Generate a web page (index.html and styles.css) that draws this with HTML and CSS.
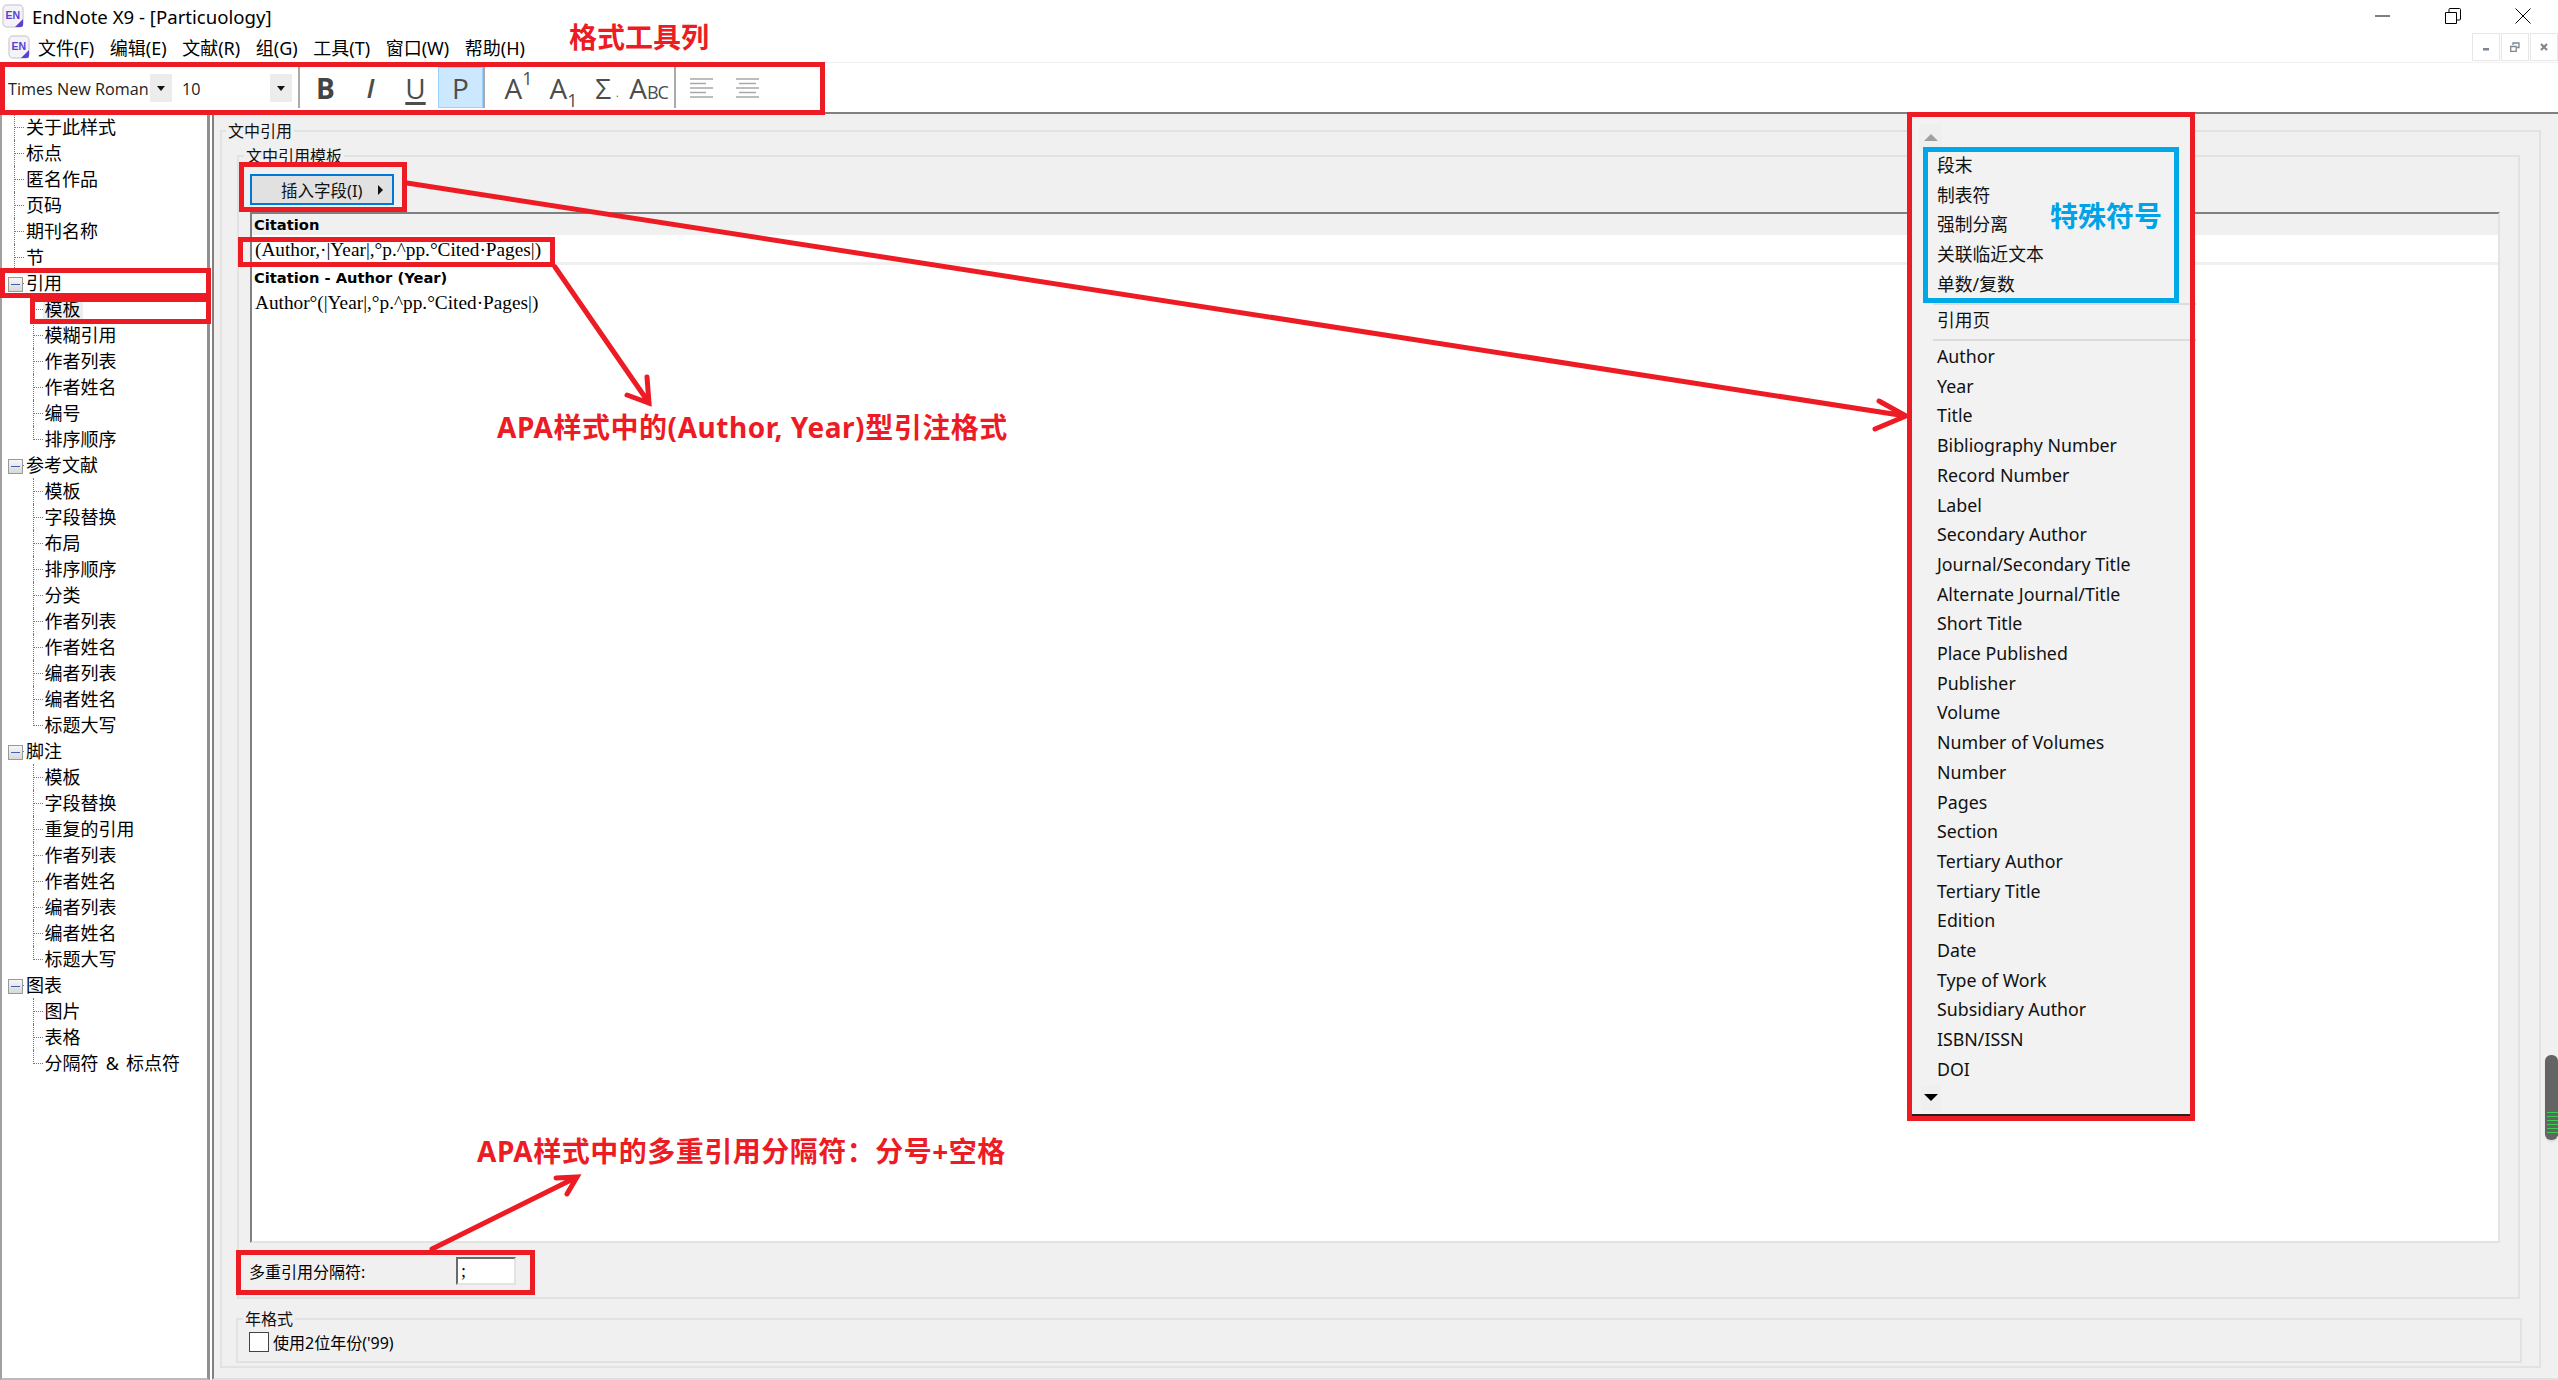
FILE: index.html
```html
<!DOCTYPE html>
<html lang="zh-CN">
<head>
  <meta charset="UTF-8" />
  <title>EndNote X9 - [Particuology]</title>
  <link rel="stylesheet" href="styles.css">
</head>
<body>
  <div class="app">
    <div class="titlebar">
      <svg class="en-icon title-icon" viewBox="0 0 22 24"><rect x="1" y="1" width="20" height="22" rx="4" fill="#f4f4f8" stroke="#d4d4dc" stroke-width="1.5"/><text x="3.5" y="15" class="en-text">EN</text><path d="M21 15v6q0 2-2 2h-6z" fill="#5b3fd0"/></svg>
      <span class="title-text">EndNote X9 - [Particuology]</span>
      <div class="win-controls">
        <div class="win-btn"><svg width="16" height="16" viewBox="0 0 16 16"><path d="M0 8h15" stroke="#000" fill="none"/></svg></div>
        <div class="win-btn"><svg width="16" height="16" viewBox="0 0 16 16"><path d="M.5 4.500h11v11H.5zM4 4V1.500q0-1 1-1h9.500q1 0 1 1V11q0 1-1 1H12" stroke="#000" fill="none"/></svg></div>
        <div class="win-btn"><svg width="16" height="16" viewBox="0 0 16 16"><path d="M.5.500l15 15M15.500.500l-15 15" stroke="#000" fill="none"/></svg></div>
      </div>
    </div>

    <div class="menubar">
      <svg class="en-icon" viewBox="0 0 22 24"><rect x="1" y="1" width="20" height="22" rx="4" fill="#f4f4f8" stroke="#d4d4dc" stroke-width="1.5"/><text x="3.5" y="15" class="en-text">EN</text><path d="M21 15v6q0 2-2 2h-6z" fill="#5b3fd0"/></svg>
      <span>文件(F)</span>
      <span>编辑(E)</span>
      <span>文献(R)</span>
      <span>组(G)</span>
      <span>工具(T)</span>
      <span>窗口(W)</span>
      <span>帮助(H)</span>
      <div class="mdi-controls">
        <div class="mdi-btn"><svg width="10" height="10" viewBox="0 0 10 10"><rect x="2" y="6" width="6" height="2.500" fill="#7d8794"/></svg></div>
        <div class="mdi-btn"><svg width="10" height="10" viewBox="0 0 10 10"><path d="M.7 4.500h5.500v4.800H.7zM3 3V1h6v4.500H7" stroke="#7d8794" stroke-width="1.300" fill="none"/></svg></div>
        <div class="mdi-btn"><svg width="10" height="10" viewBox="0 0 10 10"><path d="M2 2l6 6M8 2l-6 6" stroke="#7d8794" stroke-width="2.200" fill="none"/></svg></div>
      </div>
    </div>

    <div class="toolbar">
      <div class="tb-font">Times New Roman</div>
      <div class="tb-drop"></div>
      <div class="tb-size">10</div>
      <div class="tb-drop"></div>
      <div class="tb-sep first"></div>
      <div class="tb-btn bold">B</div>
      <div class="tb-btn italic">I</div>
      <div class="tb-btn under">U</div>
      <div class="tb-btn active">P</div>
      <div class="tb-sep"></div>
      <div class="tb-gap"></div>
      <div class="tb-btn">A<span class="sup">1</span></div>
      <div class="tb-btn">A<span class="sub">1</span></div>
      <div class="tb-btn sigma">Σ<span class="dot">.</span></div>
      <div class="tb-btn abc">A<span class="small-caps">BC</span></div>
      <div class="tb-sep last"></div>
      <svg class="align-icon" width="24" height="20" viewBox="0 0 24 20"><path d="M0 1h23M0 5.500h16M0 10h23M0 14.500h16M0 19h23" stroke="#a8a8a8" stroke-width="1.500"/></svg>
      <svg class="align-icon" width="24" height="20" viewBox="0 0 24 20"><path d="M0 1h23M3 5.500h17M0 10h23M3 14.500h17M0 19h23" stroke="#a8a8a8" stroke-width="1.500"/></svg>
    </div>

    <div class="main">
      <div class="tree">
        <div class="t-root line">关于此样式</div>
        <div class="t-root line">标点</div>
        <div class="t-root line">匿名作品</div>
        <div class="t-root line">页码</div>
        <div class="t-root line">期刊名称</div>
        <div class="t-root line">节</div>
        <div class="t-root open">引用</div>
        <div class="t-leaf"><span class="selected">模板</span></div>
        <div class="t-leaf">模糊引用</div>
        <div class="t-leaf">作者列表</div>
        <div class="t-leaf">作者姓名</div>
        <div class="t-leaf">编号</div>
        <div class="t-leaf last">排序顺序</div>
        <div class="t-root open">参考文献</div>
        <div class="t-leaf">模板</div>
        <div class="t-leaf">字段替换</div>
        <div class="t-leaf">布局</div>
        <div class="t-leaf">排序顺序</div>
        <div class="t-leaf">分类</div>
        <div class="t-leaf">作者列表</div>
        <div class="t-leaf">作者姓名</div>
        <div class="t-leaf">编者列表</div>
        <div class="t-leaf">编者姓名</div>
        <div class="t-leaf last">标题大写</div>
        <div class="t-root open">脚注</div>
        <div class="t-leaf">模板</div>
        <div class="t-leaf">字段替换</div>
        <div class="t-leaf">重复的引用</div>
        <div class="t-leaf">作者列表</div>
        <div class="t-leaf">作者姓名</div>
        <div class="t-leaf">编者列表</div>
        <div class="t-leaf">编者姓名</div>
        <div class="t-leaf last">标题大写</div>
        <div class="t-root open">图表</div>
        <div class="t-leaf">图片</div>
        <div class="t-leaf">表格</div>
        <div class="t-leaf last">分隔符 &amp; 标点符</div>
      </div>

      <div class="pane">
        <fieldset class="group outer">
          <legend>文中引用</legend>
          <fieldset class="group template">
            <legend>文中引用模板</legend>
            <button class="insert-btn">插入字段(I)<span class="arrow-right"></span></button>
            <div class="editor">
              <div class="ed-head">Citation</div>
              <div class="ed-line sep">(Author,·|Year|,°p.^pp.°Cited·Pages|)</div>
              <div class="ed-title">Citation - Author (Year)</div>
              <div class="ed-line">Author°(|Year|,°p.^pp.°Cited·Pages|)</div>
            </div>
            <div class="sep-row">
              <label class="sep-label">多重引用分隔符:</label>
              <div class="sep-input">;</div>
            </div>
          </fieldset>
          <fieldset class="group year">
            <legend>年格式</legend>
            <div class="check-row">
              <span class="checkbox"></span>
              <span>使用2位年份('99)</span>
            </div>
          </fieldset>
        </fieldset>
      </div>
    </div>

    <!-- popup menu -->
    <div class="popup">
      <div class="scroll-up"><span class="tri-up"></span></div>
      <div class="pop-item">段末</div>
      <div class="pop-item">制表符</div>
      <div class="pop-item">强制分离</div>
      <div class="pop-item">关联临近文本</div>
      <div class="pop-item">单数/复数</div>
      <div class="pop-sep"></div>
      <div class="pop-item">引用页</div>
      <div class="pop-sep second"></div>
      <div class="pop-item">Author</div>
      <div class="pop-item">Year</div>
      <div class="pop-item">Title</div>
      <div class="pop-item">Bibliography Number</div>
      <div class="pop-item">Record Number</div>
      <div class="pop-item">Label</div>
      <div class="pop-item">Secondary Author</div>
      <div class="pop-item">Journal/Secondary Title</div>
      <div class="pop-item">Alternate Journal/Title</div>
      <div class="pop-item">Short Title</div>
      <div class="pop-item">Place Published</div>
      <div class="pop-item">Publisher</div>
      <div class="pop-item">Volume</div>
      <div class="pop-item">Number of Volumes</div>
      <div class="pop-item">Number</div>
      <div class="pop-item">Pages</div>
      <div class="pop-item">Section</div>
      <div class="pop-item">Tertiary Author</div>
      <div class="pop-item">Tertiary Title</div>
      <div class="pop-item">Edition</div>
      <div class="pop-item">Date</div>
      <div class="pop-item">Type of Work</div>
      <div class="pop-item">Subsidiary Author</div>
      <div class="pop-item">ISBN/ISSN</div>
      <div class="pop-item">DOI</div>
      <div class="scroll-down"><span class="tri-down"></span></div>
    </div>

    <div class="side-thumb"><span class="thumb-lines"></span></div>

    <!-- red annotations on top of the screenshot -->
    <div class="mark box-toolbar"></div>
    <div class="mark box-cite"></div>
    <div class="mark box-tpl"></div>
    <div class="mark box-btn"></div>
    <div class="mark box-code"></div>
    <div class="mark box-sep"></div>
    <div class="mark box-popup"></div>
    <div class="mark box-special"></div>
    <div class="note note-toolbar">格式工具列</div>
    <div class="note note-apa">APA样式中的(Author, Year)型引注格式</div>
    <div class="note note-sep">APA样式中的多重引用分隔符：分号+空格</div>
    <div class="note note-special">特殊符号</div>
    <svg class="arrows" width="2558" height="1380" viewBox="0 0 2558 1380">
      <g fill="none" stroke="#ed1c24" stroke-width="5" stroke-linecap="round">
        <path d="M407 183L1906 416M1879 401L1906 416L1875 429"/>
        <path d="M555 267L649 403M647 377L649 403L627 395"/>
        <path d="M432 1249L577 1177M556 1178L577 1177L567 1194"/>
      </g>
    </svg>
  </div>
</body>
</html>
```

FILE: styles.css
```css
* {
  box-sizing: border-box;
}

body {
  margin: 0;
  background: #fff;
  color: #000;
  font-family: "Noto Sans", "Noto Sans CJK SC", sans-serif;
}

.app {
  position: relative;
  display: flex;
  flex-direction: column;
  width: 2558px;
  height: 1380px;
  overflow: hidden;
}

/* title + menu */
.titlebar {
  display: flex;
  align-items: center;
  height: 32px;
  padding-left: 2px;
  font-size: 18.600px;
  flex-shrink: 0;
}

.en-icon {
  width: 22px;
  height: 24px;
  flex-shrink: 0;
}

.en-text {
  font: bold 10.500px "Liberation Sans", sans-serif;
  fill: #5b3fd0;
}

.title-icon {
  margin-right: 8px;
}

.win-controls {
  display: flex;
  margin-left: auto;
}

.win-btn {
  display: flex;
  align-items: center;
  justify-content: center;
  width: 70px;
  height: 32px;
}

.menubar {
  display: flex;
  align-items: center;
  gap: 15.600px;
  height: 30px;
  padding-left: 8px;
  font-size: 18px;
  flex-shrink: 0;
}

.menubar .en-icon {
  margin-right: -7.600px;
}

.mdi-controls {
  display: flex;
  gap: 1px;
  margin-left: auto;
}

.mdi-btn {
  display: flex;
  align-items: center;
  justify-content: center;
  width: 28px;
  height: 28px;
  border: 1px solid #e6e6e6;
}

/* format toolbar */
.toolbar {
  display: flex;
  align-items: center;
  height: 52px;
  padding-left: 8px;
  border-top: 1px solid #f0f0f0;
  border-bottom: 2px solid #808080;
  flex-shrink: 0;
}

.tb-font {
  width: 142px;
  padding-top: 3px;
  font: 16.200px "Open Sans", sans-serif;
  white-space: nowrap;
  overflow: hidden;
  color: #222;
}

.tb-size {
  width: 98px;
  padding: 3px 0 0 10px;
  font: 16.200px "Open Sans", sans-serif;
  color: #222;
}

.tb-drop {
  position: relative;
  width: 22px;
  height: 28px;
  background: #ececec;
}

.tb-drop::after {
  content: "";
  position: absolute;
  left: 7px;
  top: 12px;
  border: 4.500px solid transparent;
  border-top: 5px solid #111;
  border-bottom: 0;
}

.tb-sep {
  width: 2px;
  height: 41px;
  background: #aaa;
}

.tb-sep.first {
  margin: 0 3px 0 6px;
}

.tb-sep.last {
  margin: 0 14px 0 3px;
}

.tb-gap {
  width: 11px;
}

.tb-btn {
  display: flex;
  align-items: center;
  justify-content: center;
  width: 45px;
  height: 41px;
  font: 28px "Open Sans", sans-serif;
  color: #4d4d4d;
}

.tb-btn.bold {
  font-weight: 700;
  color: #444;
}

.tb-btn.italic {
  font-style: italic;
  font-weight: 600;
  font-size: 27px;
}

.tb-btn.under {
  text-decoration: underline;
  text-decoration-thickness: 3px;
  text-underline-offset: 3px;
}

.tb-btn.active {
  background: #cce8ff;
  border: 1px solid #99d1ff;
}

.tb-btn.sigma {
  width: 40px;
  padding-left: 2px;
}

.sup {
  font-size: 18px;
  align-self: flex-start;
  margin-top: -1px;
}

.sub {
  font-size: 18px;
  align-self: flex-end;
  margin-bottom: -4px;
}

.dot {
  font-size: 10px;
  align-self: flex-end;
  margin: 0 0 8px 5px;
}

.small-caps {
  font-size: 18px;
  align-self: flex-end;
  margin-bottom: 4px;
  letter-spacing: -1px;
}

.align-icon {
  margin-right: 22px;
}

/* main area */
.main {
  display: flex;
  flex: 1;
  min-height: 0;
}

.tree {
  width: 210px;
  padding-top: 0;
  border-left: 2px solid #a0a0a0;
  border-right: 3px solid #909090;
  border-bottom: 2px solid #bbb;
  font-size: 18px;
  word-spacing: 2.500px;
  flex-shrink: 0;
}

.t-root,
.t-leaf {
  position: relative;
  height: 26px;
  line-height: 26px;
  white-space: nowrap;
}

.t-root {
  padding-left: 24px;
}

.t-leaf {
  padding-left: 42.500px;
}

.t-root::before,
.t-leaf::before {
  content: "";
  position: absolute;
  top: 13px;
  border-top: 1px dotted #777;
}

.t-root::before {
  left: 12px;
  width: 10px;
}

.t-leaf::before {
  left: 31px;
  width: 10px;
}

.t-root.line::after,
.t-leaf::after {
  content: "";
  position: absolute;
  top: 0;
  height: 26px;
  border-left: 1px dotted #777;
}

.t-root.line::after {
  left: 12px;
}

.t-leaf::after {
  left: 31px;
}

.t-leaf.last::after {
  height: 14px;
}

/* expander box, the minus is a gradient stripe */
.t-root.open::after {
  content: "";
  position: absolute;
  left: 6px;
  top: 7px;
  width: 13px;
  height: 13px;
  border: 1px solid #999;
  background: linear-gradient(#3f5fb5, #3f5fb5) center / 9px 1px no-repeat, linear-gradient(#f6f6f6, #d8d8d8);
}

.selected {
  display: inline-block;
  padding: 0 2px;
  margin-left: -2px;
  line-height: 23px;
  background: #eeeeee;
}

.pane {
  flex: 1;
  margin-left: 2px;
  padding: 6px 17px 10px 6px;
  background: #f0f0f0;
  border-left: 2px solid #808080;
  border-bottom: 2px solid #e0e0e0;
  min-width: 0;
}

.group {
  min-width: 0;
  margin: 0;
  padding: 0;
  border: 2px solid #e2e2e2;
  font-size: 16px;
}

.group legend {
  height: 20px;
  line-height: 20px;
  padding: 0 2px;
  margin-left: -6px;
  color: #111;
  background: #f0f0f0;
  white-space: nowrap;
}

.group.outer {
  height: 1248px;
}

.group.outer > legend {
  height: 22px;
  line-height: 22px;
  margin-left: 4px;
}

.group.template {
  margin: 4px 19px 0 15px;
  padding: 8px 18px 0 11px;
}

.group.year {
  margin: 10px 17px 0 14px;
  padding: 3px 0 9px 11px;
}

.insert-btn {
  display: flex;
  align-items: center;
  width: 144px;
  height: 31px;
  margin-bottom: 7px;
  padding: 0 0 0 29px;
  background: #e1e1e1;
  border: 2px solid #0078d7;
  font: 16.500px "Noto Sans", "Noto Sans CJK SC", sans-serif;
  color: #111;
}

.arrow-right {
  margin-left: 15px;
  border: 5px solid transparent;
  border-left: 5px solid #111;
  border-right: 0;
}

.editor {
  height: 1031px;
  background: #fff;
  border: 2px solid;
  border-color: #808080 #e3e3e3 #e3e3e3 #808080;
}

.ed-head,
.ed-title {
  padding-left: 2px;
  font: bold 14.700px/24px "DejaVu Sans", sans-serif;
}

.ed-head {
  height: 21px;
  line-height: 22px;
  background: #f0f0f0;
}

.ed-title {
  height: 26px;
  padding-top: 1px;
}

.ed-line {
  height: 25px;
  padding-left: 3px;
  font: 19.300px/24px "Liberation Serif", serif;
  white-space: nowrap;
}

.ed-line.sep {
  height: 30px;
  border-bottom: 3px solid #f0f0f0;
  line-height: 29px;
}

.sep-row {
  display: flex;
  align-items: center;
  height: 54px;
  padding-top: 14px;
  padding-bottom: 12px;
  margin-left: -1px;
}

.sep-label {
  width: 207px;
  font-size: 16px;
}

.sep-input {
  width: 60px;
  height: 28px;
  padding-left: 3px;
  background: #fff;
  border: 2px solid;
  border-color: #6a6a6a #e3e3e3 #e3e3e3 #6a6a6a;
  font: 18px/24px "Liberation Serif", serif;
}

.check-row {
  display: flex;
  align-items: center;
  gap: 4px;
  height: 20px;
  font-size: 16px;
}

.checkbox {
  width: 20px;
  height: 20px;
  background: #fff;
  border: 1px solid #444;
}

/* popup menu */
.popup {
  position: absolute;
  left: 1910px;
  top: 115px;
  width: 282px;
  height: 1002px;
  padding-left: 27px;
  background: #f2f2f2;
  border-bottom: 3px solid #222;
  font-size: 17.800px;
}

.scroll-up {
  display: flex;
  align-items: center;
  justify-content: center;
  width: 23px;
  height: 27px;
  margin: 9px 0 0 -18px;
  background: #efefef;
}

.tri-up {
  border: 7px solid transparent;
  border-bottom: 7px solid #a0a0a0;
  border-top: 0;
}

.pop-item {
  height: 29.710px;
  line-height: 29.710px;
  white-space: nowrap;
  color: #111;
}

.pop-sep {
  height: 2px;
  margin: 3.500px -4px 1px -4px;
  background: #dcdcdc;
}

.pop-sep.second {
  margin: 3px -4px 1.300px -4px;
}

.scroll-down {
  display: flex;
  align-items: center;
  justify-content: center;
  width: 20px;
  height: 26px;
  margin-left: -16px;
  background: #efefef;
}

.tri-down {
  border: 7px solid transparent;
  border-top: 7px solid #000;
  border-bottom: 0;
}

.side-thumb {
  position: absolute;
  left: 2545px;
  top: 1055px;
  width: 13px;
  height: 85px;
  background: #646464;
  border-radius: 6px;
  box-shadow: 0 2px 2px #ddd;
}

.thumb-lines {
  position: absolute;
  left: 2px;
  right: 0;
  top: 57px;
  height: 24px;
  background: repeating-linear-gradient(#35d04f 0 1px, #646464 1px 4px);
}

/* annotations */
.mark {
  position: absolute;
  border: 5px solid #ed1c24;
}

.box-toolbar {
  left: 0;
  top: 62px;
  width: 825px;
  height: 53px;
}

.box-cite {
  left: 0;
  top: 268px;
  width: 211px;
  height: 30px;
}

.box-tpl {
  left: 30px;
  top: 297px;
  width: 181px;
  height: 27px;
}

.box-btn {
  left: 239px;
  top: 162px;
  width: 168px;
  height: 50px;
}

.box-code {
  left: 238px;
  top: 237px;
  width: 317px;
  height: 30px;
}

.box-sep {
  left: 236px;
  top: 1250px;
  width: 299px;
  height: 45px;
}

.box-popup {
  left: 1907px;
  top: 112px;
  width: 288px;
  height: 1009px;
}

.box-special {
  left: 1923px;
  top: 147px;
  width: 256px;
  height: 156px;
  border-color: #00a8e8;
}

.note {
  position: absolute;
  font: bold 28px/36px "Noto Sans", "Noto Sans CJK SC", sans-serif;
  color: #ed1c24;
  white-space: nowrap;
}

.note-toolbar {
  left: 569px;
  top: 19px;
}

.note-apa {
  left: 497px;
  top: 409px;
  letter-spacing: 0.550px;
}

.note-sep {
  left: 477px;
  top: 1133px;
  letter-spacing: 0.500px;
}

.note-special {
  left: 2050px;
  top: 198px;
  color: #00a2e8;
}

.arrows {
  position: absolute;
  left: 0;
  top: 0;
  pointer-events: none;
}
```
